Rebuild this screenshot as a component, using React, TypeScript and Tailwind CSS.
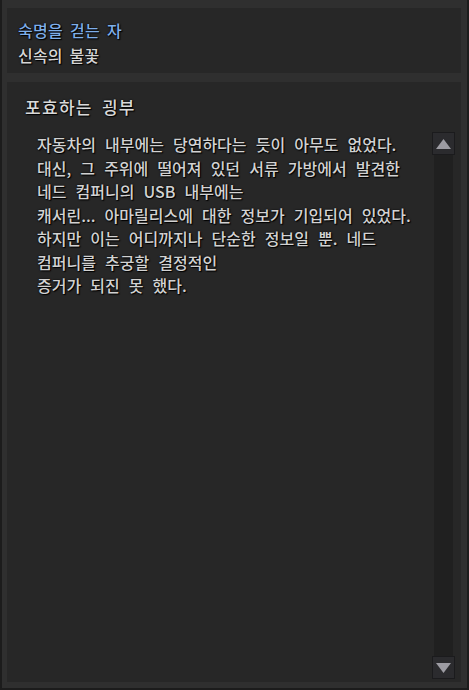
const lines = [
  '자동차의 내부에는 당연하다는 듯이 아무도 없었다.',
  '대신, 그 주위에 떨어져 있던 서류 가방에서 발견한',
  '네드 컴퍼니의 USB 내부에는',
  '캐서린... 아마릴리스에 대한 정보가 기입되어 있었다.',
  '하지만 이는 어디까지나 단순한 정보일 뿐. 네드',
  '컴퍼니를 추궁할 결정적인',
  '증거가 되진 못 했다.',
];

const font = "font-['Noto_Sans_CJK_KR','Noto_Sans',sans-serif]";
const shadow = '[text-shadow:0_0_2px_#000,1px_1px_1px_#000]';

function ScrollButton({ up }: { up: boolean }) {
  return (
    <div className="flex h-[23px] w-[23px] items-center justify-center border border-[#1b1b1d] bg-[#2b2b2e]">
      <svg width="15" height="10" viewBox="0 0 15 10">
        {up ? <polygon points="7.5,0 15,10 0,10" fill="#9d9ca3" /> : <polygon points="0,0 15,0 7.5,10" fill="#9d9ca3" />}
      </svg>
    </div>
  );
}

export default function App() {
  return (
    <div className={`flex h-[690px] w-[469px] flex-col gap-[9px] border-x-2 border-b-2 border-x-[#1c1c1c] border-b-[#1c1c1c] bg-[#2f2f2f] pl-[5px] pr-[6px] pt-[8px] pb-[6px] ${font}`}>
      <div className="flex h-[65px] flex-col justify-center bg-[#272727] pl-[11px] pt-[4px]">
        <div className={`text-[16px] font-medium leading-[25px] tracking-[0.3px] text-[#7eaee9] [word-spacing:3px] ${shadow}`}>숙명을 걷는 자</div>
        <div className={`text-[16px] font-medium leading-[25px] tracking-[0.2px] text-[#d6d6d6] [word-spacing:3px] ${shadow}`}>신속의 불꽃</div>
      </div>

      <div className="flex flex-1 flex-col bg-[#272727]">
        <div className="flex h-[50px] items-center pl-[18px]">
          <div className={`text-[17px] font-medium tracking-[1.3px] text-[#d9d9d9] [word-spacing:4px] ${shadow}`}>포효하는 굉부</div>
        </div>
        <div className="flex flex-1 pb-[3px] pr-[6px]">
          <div className="flex-1 pl-[30px] pt-[1px]">
            {lines.map((l, i) => (
              <div key={i} className={`whitespace-nowrap text-[16px] font-medium leading-[23.5px] text-[#d2d2d2] [word-spacing:5.5px] ${shadow}`}>
                {l}
              </div>
            ))}
          </div>
          <div className="flex w-[23px] flex-col">
            <ScrollButton up />
            <div className="mx-[2px] flex-1 bg-[#202020]" />
            <ScrollButton up={false} />
          </div>
        </div>
      </div>
    </div>
  );
}
